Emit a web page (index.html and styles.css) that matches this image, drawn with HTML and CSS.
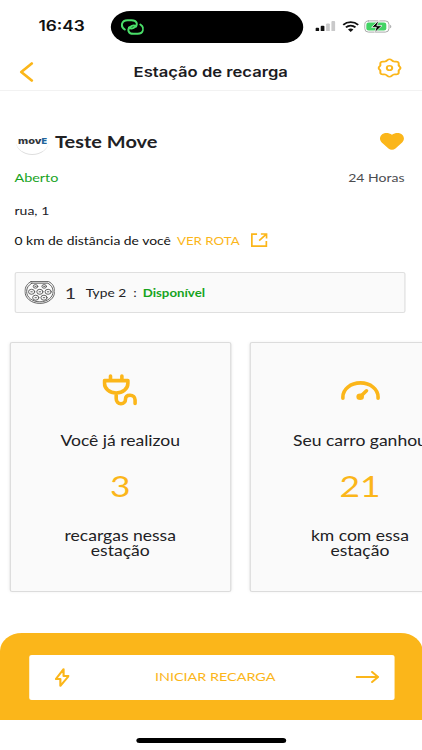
FILE: index.html
```html
<!DOCTYPE html>
<html lang="pt-BR">
<head>
<meta charset="utf-8">
<meta name="viewport" content="width=device-width, initial-scale=1">
<title>Estação de recarga</title>
<link rel="stylesheet" href="styles.css">
</head>
<body>
<main class="screen">
  <div class="statusbar">
    <span class="time">16:43</span>
    <div class="island">
      <svg class="link-icon" viewBox="0 0 24 16" preserveAspectRatio="none"><path d="M4.200 10.500C-.5 7.500.8 1.200 7 1.200h4c5.500 0 6.500 4.500 3.500 6.800-2 1.500-4.500 1.800-6 .5M19.800 5.500c4.700 3 3.400 9.300-2.800 9.300h-4c-5.500 0-6.500-4.500-3.500-6.800 2-1.500 4.500-1.800 6-.5"/></svg>
    </div>
    <div class="indicators">
      <svg class="signal" viewBox="0 0 20 11" preserveAspectRatio="none"><rect x="0" y="7" width="3.700" height="4" rx="1"/><rect x="5.300" y="5" width="3.700" height="6" rx="1"/><g class="weak"><rect x="10.700" y="2.500" width="3.700" height="8.500" rx="1"/><rect x="16" y="0" width="3.700" height="11" rx="1"/></g></svg>
      <svg class="wifi" viewBox="0 0 17 12" preserveAspectRatio="none"><path d="M1 4.200c4.300-3.900 10.700-3.900 15 0M3.700 7c2.800-2.500 6.800-2.500 9.600 0"/><path class="dot" d="M5.800 9.200c1.600-1.400 3.800-1.400 5.400 0L8.500 12z"/></svg>
      <svg class="battery" viewBox="0 0 28 13" preserveAspectRatio="none"><rect class="shell" x=".6" y=".9" width="24.300" height="11.200" rx="3.700"/><rect class="charge" x="2.200" y="2.500" width="20" height="8" rx="2.300"/><path class="cap" d="M26 4.700c1.600.5 1.600 3.100 0 3.600z"/><path class="bolt" d="M14.800.3 7.500 7.300h4.700l-1.700 5.400 7.400-7h-4.800z"/></svg>
    </div>
  </div>

  <header class="header">
    <svg class="back" viewBox="0 0 14 20" preserveAspectRatio="none"><path d="M12.300 1.500 1.800 10l10.500 8.500"/></svg>
    <h1>Estação de recarga</h1>
    <svg class="gear" viewBox="0 0 24 24" preserveAspectRatio="none"><path d="M12 1.500c2 0 2.500 2.200 4.300 2.700 1.600.4 3.200-.5 4.300.7 1.200 1.200.3 2.800.6 4.200.4 1.300 1.800 1.500 1.800 2.900s-1.400 1.600-1.800 2.900c-.3 1.400.6 3-.6 4.200-1.100 1.200-2.700.3-4.300.7-1.800.5-2.300 2.700-4.300 2.700s-2.500-2.200-4.300-2.700c-1.600-.4-3.200.5-4.300-.7-1.200-1.200-.3-2.800-.6-4.200C2.400 13.600 1 13.400 1 12s1.400-1.600 1.800-2.900c.3-1.400-.6-3 .6-4.200 1.100-1.200 2.700-.3 4.300-.7C9.500 3.700 10 1.500 12 1.500z"/><circle cx="12" cy="12" r="2.700"/></svg>
  </header>

  <section class="station">
    <div class="title-row">
      <div class="brand"><span>mov<b>E</b></span></div>
      <h2>Teste Move</h2>
      <svg class="heart" viewBox="0 0 24 17" preserveAspectRatio="none"><path d="M12 1.700C8.500-.6 4-.6 1.500 2-.6 4.300-.4 7.300 1.800 9.500l6.700 6c2 1.700 5 1.700 7 0l6.700-6c2.200-2.200 2.400-5.200.3-7.500C20-.6 15.500-.6 12 1.700z"/></svg>
    </div>
    <div class="hours-row"><span class="open">Aberto</span><span class="hours">24 Horas</span></div>
    <p class="address">rua, 1</p>
    <div class="distance-row">
      <span class="distance">0 km de distância de você</span>
      <a class="route">VER ROTA</a>
      <svg class="external" viewBox="0 0 17 14" preserveAspectRatio="none"><path d="M6.200 1.200H1v11.900h14.500V8M10 1h5.700v4.600M15.500 1.200 8.300 7.600"/></svg>
    </div>
    <div class="connector">
      <svg class="socket" viewBox="0 0 30 23" preserveAspectRatio="none"><path class="outer" d="M6.500.6h17C27.300 2.500 29.400 6 29.400 10.500c0 6.500-6 11.900-14.400 11.900S.6 17 .6 10.500C.6 6 2.700 2.500 6.500.6z"/><path d="M7.200 2.200h15.600c3.300 2 5 4.700 5 8.300 0 5.700-5.300 10.300-12.800 10.300S2.200 16.200 2.200 10.500c0-3.600 1.700-6.300 5-8.300z"/><g class="pins"><ellipse cx="10.800" cy="5.400" rx="2.200" ry="1.800"/><ellipse cx="19.200" cy="5.400" rx="2.200" ry="1.800"/><ellipse cx="7" cy="10.800" rx="3" ry="2.500"/><ellipse cx="15" cy="10.800" rx="3" ry="2.500"/><ellipse cx="23" cy="10.800" rx="3" ry="2.500"/><ellipse cx="11" cy="16.700" rx="3" ry="2.500"/><ellipse cx="19" cy="16.700" rx="3" ry="2.500"/></g><path d="M6.300 10.800h1.400M14.300 10.800h1.400M22.300 10.800h1.400M10.300 16.700h1.400M18.300 16.700h1.400M10.300 5.400h1M18.700 5.400h1"/></svg>
      <span class="number">1</span>
      <span class="type">Type 2&nbsp; :</span>
      <span class="available">Disponível</span>
    </div>
  </section>

  <section class="cards">
    <article class="card">
      <div class="card-icon"><svg class="plug" viewBox="0 0 35 32" preserveAspectRatio="none"><path d="M2.200 6.600h23.400v2.600c0 5.500-5 9.800-11.700 9.800S2.200 14.700 2.200 9.200zM8.200 6V2M19.600 6V2M13.900 19v5.500c0 3.200 1.900 5.200 4.800 5.200s4.500-2 4.500-4.500 1.700-4 4.600-4 5 1.900 5 4.800v3.500"/></svg></div>
      <p class="lead">Você já realizou</p>
      <strong>3</strong>
      <p class="detail">recargas nessa<br>estação</p>
    </article>
    <article class="card">
      <div class="card-icon"><svg class="gauge" viewBox="0 0 39 19" preserveAspectRatio="none"><path d="M1.900 17.200V16C1.900 8.200 9.500 1.900 19.500 1.900S37.100 8.200 37.100 16v1.200M19.500 15.500l6-5.700"/><ellipse cx="19.200" cy="15.700" rx="3.800" ry="3.200"/></svg></div>
      <p class="lead">Seu carro ganhou</p>
      <strong>21</strong>
      <p class="detail">km com essa<br>estação</p>
    </article>
  </section>

  <footer class="footer">
    <button class="start">
      <svg class="flash" viewBox="0 0 14 19" preserveAspectRatio="none"><path d="M8.200 1.200 1 11h4.200v6.800L13 8H8.200z"/></svg>
      <span>INICIAR RECARGA</span>
      <svg class="arrow" viewBox="0 0 24 12" preserveAspectRatio="none"><path d="M1 6h21.500M16.500 1l6 5-6 5"/></svg>
    </button>
  </footer>
  <div class="home"><i></i></div>
</main>
</body>
</html>
```
FILE: styles.css
```css
/* The screen is laid out narrow and widened to fill the viewport;
   --u is one horizontal viewport pixel inside the widened screen. */
* { box-sizing: border-box; }
html, body { margin: 0; width: 422px; height: 750px; overflow: hidden; background: #fff; }
.screen {
  --u: calc(1px / 1.2178);
  --gold: #fbb61a;
  width: calc(var(--u) * 422);
  height: 750px;
  transform: scaleX(1.2178);
  transform-origin: 0 0;
  display: flex;
  flex-direction: column;
  overflow: hidden;
  background: #fff;
  color: #212124;
  font-family: Lato, "Liberation Sans", sans-serif;
  font-size: 11.500px;
}
h1, h2, p { margin: 0; }
svg { display: block; flex: none; fill: none; stroke: var(--gold); stroke-linecap: round; stroke-linejoin: round; }

.statusbar { height: 52px; flex: none; display: flex; align-items: center; }
.time { width: calc(var(--u) * 111); padding-left: calc(var(--u) * 38.500); font: 600 14.200px/18px Inter, sans-serif; color: #111; }
.island { width: calc(var(--u) * 192); height: 32px; margin-top: 1px; padding-left: calc(var(--u) * 9); border-radius: 16px; background: #000; display: flex; align-items: center; }
.link-icon { width: calc(var(--u) * 24); height: 16px; stroke: #4ade69; stroke-width: 2; }
.indicators { display: flex; align-items: center; padding-left: calc(var(--u) * 13); }
.signal { width: calc(var(--u) * 20); height: 10.500px; fill: #111; stroke: none; }
.weak { fill: #c9c9ca; }
.wifi { width: calc(var(--u) * 17); height: 11px; margin-left: calc(var(--u) * 6); stroke: #111; stroke-width: 2; stroke-linecap: butt; }
.dot { fill: #111; stroke: none; }
.battery { width: calc(var(--u) * 28); height: 13px; margin-left: calc(var(--u) * 5); stroke: none; }
.shell { stroke: #a9aaaa; stroke-width: 1; }
.charge { fill: #43d365; }
.cap { fill: #a9aaaa; }
.bolt { fill: #000; stroke: #fff; stroke-width: .800; }

.header { height: 39px; flex: none; display: flex; align-items: center; justify-content: space-between; padding: 0 calc(var(--u) * 20.500) 0 calc(var(--u) * 20); border-bottom: 1px solid #f2f2f2; }
.header h1 { font: 600 13.650px/20px Inter, sans-serif; margin: 2px 0 0 calc(var(--u) * 10); color: #1b1b1e; }
.back { width: calc(var(--u) * 14); height: 20px; margin-top: 1px; stroke-width: 2.700; }
.gear { width: calc(var(--u) * 24); height: 20px; margin-top: -7px; stroke-width: 2; }

.station { height: 251px; flex: none; padding: 35px calc(var(--u) * 17.500) 0 calc(var(--u) * 14.500); }
.title-row { display: flex; align-items: center; height: 31px; }
.brand { width: calc(var(--u) * 33); height: 27px; margin-left: calc(var(--u) * 1.500); border-radius: 50%; border-bottom: 1px solid #dedede; display: flex; justify-content: center; font: 800 9px/25px Inter, sans-serif; color: #33363b; }
.brand b { color: #23649b; font-size: 7.400px; font-weight: 900; }
.title-row h2 { font-size: 16.400px; line-height: 22px; font-weight: 700; margin-left: calc(var(--u) * 6); }
.heart { width: calc(var(--u) * 24); height: 17px; margin-left: auto; fill: var(--gold); stroke: none; }
.hours-row { display: flex; justify-content: space-between; margin-top: 13px; line-height: 16px; }
.open { color: #16a31d; font-size: 11.800px; }
.hours { color: #4c4c4f; }
.address { margin-top: 17px; line-height: 16px; }
.distance-row { display: flex; align-items: center; margin-top: 13px; height: 16px; color: #111; white-space: nowrap; font-size: 11.400px; }
.distance { width: calc(var(--u) * 162.500); }
.route { color: var(--gold); width: calc(var(--u) * 74); font-size: 10.900px; }
.external { width: calc(var(--u) * 17); height: 14px; stroke-width: 1.700; stroke-linecap: butt; stroke-linejoin: miter; }
.connector { display: flex; align-items: center; margin-top: 24px; height: 41px; width: calc(var(--u) * 390.500); padding-left: calc(var(--u) * 8.500); border: 1px solid #dfdfdf; border-radius: 2px; background: #fafafa; }
.socket { width: calc(var(--u) * 31); height: 23px; stroke: #555; stroke-width: .900; }
.number { font-size: 16px; width: calc(var(--u) * 21); margin-left: calc(var(--u) * 9.500); color: #303033; }
.type { width: calc(var(--u) * 57); font-size: 11.300px; white-space: nowrap; }
.available { font-weight: 700; font-size: 10.900px; color: #16a31d; }

.cards { height: 291px; flex: none; display: flex; gap: calc(var(--u) * 18.200); padding-left: calc(var(--u) * 9.500); }
.card { width: calc(var(--u) * 221.500); height: 250px; flex: none; display: flex; flex-direction: column; align-items: center; text-align: center; border: 1px solid #dcdcdc; border-radius: 2px; background: #fafafa; box-shadow: 0 0 3px rgba(0, 0, 0, .06); }
.card-icon { height: 94px; display: flex; align-items: center; }
.plug { width: calc(var(--u) * 35); height: 32px; stroke-width: 3.600; }
.gauge { width: calc(var(--u) * 39); height: 19px; stroke-width: 3.600; }
.gauge ellipse { fill: var(--gold); stroke: none; }
.lead { font-size: 14.400px; line-height: 18px; margin-top: -5px; white-space: nowrap; }
.card strong { font-weight: 400; font-size: 29px; line-height: 36px; margin-top: 18px; color: var(--gold); }
.detail { font-size: 14.400px; line-height: 14.500px; margin-top: 25px; }

.footer { height: 87px; flex: none; padding: 22px calc(var(--u) * 27) 0 calc(var(--u) * 29.500); border-radius: 18px 18px 0 0; background: var(--gold); }
.start { display: flex; align-items: center; justify-content: space-between; width: 100%; height: 44.500px; padding: 0 calc(var(--u) * 15) 0 calc(var(--u) * 25); border: 0; border-radius: 2px; background: #fff; color: var(--gold); font: 400 11.800px/16px Lato, sans-serif; }
.start span { margin-left: calc(var(--u) * 5); }
.flash { width: calc(var(--u) * 15); height: 19px; stroke-width: 2; }
.arrow { width: calc(var(--u) * 24); height: 12px; stroke-width: 2; }
.home { height: 30px; flex: none; display: flex; justify-content: center; padding-top: 18px; }
.home i { width: calc(var(--u) * 150); height: 5px; border-radius: 3px; background: #000; }
```
